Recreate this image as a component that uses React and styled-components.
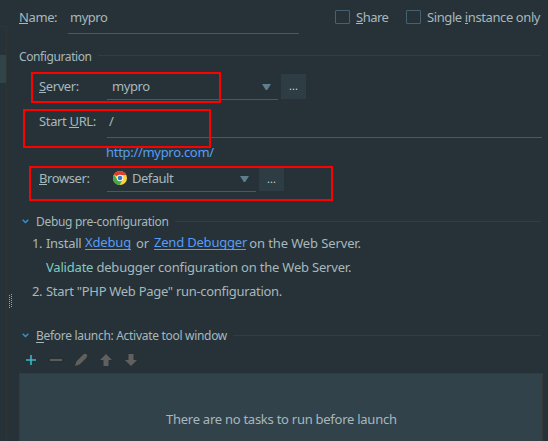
import React from "react";
import styled, { createGlobalStyle } from "styled-components";

const Global = createGlobalStyle`
  * { box-sizing: border-box; }
  body { margin: 0; background: #263238; overflow: hidden; }
`;

const Dialog = styled.div`
  position: relative;
  display: flex;
  width: 548px;
  height: 441px;
  overflow: hidden;
  background: #263238;
  color: #a7b8bd;
  font: 13px/18px "Noto Sans", sans-serif;
  white-space: pre;
`;

const Rail = styled.aside`
  width: 7px;
  height: 415px;
  margin-top: 26px;
  padding-top: 28px;
  border: solid #2f3436;
  border-width: 1px 1px 0 0;
  flex: none;
`;
const RailSelection = styled.div`
  height: 28px;
  background: #314549;
`;
const Gutter = styled.div`
  width: 12px;
  flex: none;
  padding: 294px 0 0 2px;
`;
const Grip = styled.svg`
  display: block;
`;

const Form = styled.main`
  flex: 1;
  min-width: 0;
  display: flex;
  flex-direction: column;
`;
const Row = styled.div`
  display: flex;
  flex: none;
  align-items: flex-start;
  height: ${(p) => p.$h}px;
  padding-top: ${(p) => p.$top || 0}px;
  padding-left: ${(p) => p.$indent || 0}px;
`;
const Text = styled.span`
  flex: none;
  width: ${(p) => (p.$w ? `${p.$w}px` : "auto")};
  text-align: ${(p) => (p.$center ? "center" : "left")};
  letter-spacing: ${(p) => p.$track ?? -0.4}px;
`;
const Heading = styled.span`
  flex: none;
  margin-top: 1px;
  font-size: 12px;
  letter-spacing: ${(p) => p.$track ?? -0.3}px;
`;
const Key = styled.span`
  box-shadow: inset 0 -1px #a7b8bd;
  display: inline-block;
  height: 16px;
  line-height: 18px;
`;
const Link = styled(Text)`
  color: #589df6;
`;
const UnderlinedLink = styled(Link)`
  height: 16px;
  line-height: 16px;
  border-bottom: 1px solid #589df6;
`;
const Good = styled(Text)`
  color: #80cbc4;
`;
const Field = styled.div`
  display: flex;
  flex: none;
  width: ${(p) => p.$w}px;
  height: ${(p) => p.$h}px;
  padding-left: ${(p) => p.$pad}px;
  border-bottom: 1px solid #425b67;
`;
const Arrow = styled.svg`
  display: block;
  margin: 7px 7px 0 auto;
`;
const More = styled.button`
  flex: none;
  width: 25px;
  height: ${(p) => p.$h}px;
  margin: ${(p) => p.$shift}px 0 0 3px;
  padding: 0 0 1px;
  border: 0;
  background: #2e3c43;
  color: #c5d3d8;
  font: 11px/20px "Noto Sans", sans-serif;
`;
const Check = styled.span`
  flex: none;
  width: 15px;
  height: 14px;
  margin: 2px 6px 0 0;
  border: 1px solid #46626f;
  border-radius: 1px;
`;
const Rule = styled.div`
  flex: 1;
  height: 1px;
  margin: ${(p) => p.$y}px 7px 0 6px;
  background: #2f3e46;
`;
const Chevron = styled.svg`
  flex: none;
  margin: 7px 7px 0 3px;
`;
const Toolbar = styled.div`
  display: flex;
  flex: none;
  height: 26px;
  padding: 6px 0 0 5px;
  gap: 11px;
`;
const Tool = styled.svg`
  width: 14px;
  height: 14px;
`;
const TaskPanel = styled.section`
  flex: 1;
  width: 524px;
  padding: 36px 0 0 146px;
  border: solid #38393a;
  border-width: 1px 1px 0 1px;
  background: #32424a;
  display: flex;
`;
const Highlight = styled.div`
  position: absolute;
  left: ${(p) => p.$x}px;
  top: ${(p) => p.$y}px;
  width: ${(p) => p.$w}px;
  height: ${(p) => p.$h}px;
  border: 2px solid #fe0000;
  pointer-events: none;
`;
const ChromeSvg = styled.svg`
  flex: none;
  margin: 2px 5px 0 0;
`;

const DownArrow = () => (
  <Arrow width="9" height="6" viewBox="0 0 9 6">
    <path d="M0 0h9L5.2 6H3.8z" fill="#5f7d8c" />
  </Arrow>
);
const Collapse = () => (
  <Chevron width="7" height="5" viewBox="0 0 7 5">
    <path d="M.7.8 3.5 3.5 6.3.8" fill="none" stroke="#3d8fc9" strokeWidth="1.5" />
  </Chevron>
);
const Chrome = () => (
  <ChromeSvg width="14" height="14" viewBox="0 0 14 14">
    <circle cx="7" cy="7" r="7" fill="#ffd43b" />
    <path d="M7 7 .94 3.5A7 7 0 0 1 13.06 3.5L13.3 4H7z" fill="#e33b2e" />
    <path d="M.94 3.5A7 7 0 0 0 6.6 14L9.7 8.5 7 7 4.3 8.5z" fill="#43a948" />
    <circle cx="7" cy="7" r="3.3" fill="#f5f7f8" />
    <circle cx="7" cy="7" r="2.3" fill="#3476c4" />
  </ChromeSvg>
);

const gripDots = Array.from({ length: 14 }, (_, i) => ({ x: i % 2 ? 0 : 2, y: i }));

export default function App() {
  return (
    <>
      <Global />
      <Dialog>
        <Rail><RailSelection /></Rail>
        <Gutter>
          <Grip width="4" height="14" viewBox="0 0 4 14">
            {gripDots.map((d) => (
              <rect key={d.y} x={d.x} y={d.y} width="1" height="1" fill="#9aa6aa" />
            ))}
          </Grip>
        </Gutter>
        <Form>
          <Row $h={47} $top={8}>
            <Text $w={49}><Key>N</Key>ame:</Text>
            <Field $w={231} $h={26} $pad={2}><Text $track={-0.5}>mypro</Text></Field>
            <Row $h={20} $indent={36}>
              <Check /><Text $w={50} $track={-0.5}><Key>S</Key>hare</Text>
              <Check /><Text>Single <Key>i</Key>nstance only</Text>
            </Row>
          </Row>
          <Row $h={27}>
            <Heading $track={-0.4}>Configuration</Heading><Rule $y={8} />
          </Row>
          <Row $h={38} $top={3} $indent={20}>
            <Text $w={68}><Key>S</Key>erver:</Text>
            <Field $w={171} $h={23} $pad={5}><Text>mypro</Text><DownArrow /></Field>
            <More $h={25} $shift={-3}>...</More>
          </Row>
          <Row $h={31} $indent={20}>
            <Text $w={68} $track={-0.35}>Start <Key>U</Key>RL:</Text>
            <Field $w={435} $h={26} $pad={2}><Text>/</Text></Field>
          </Row>
          <Row $h={26} $indent={87}><Link $track={-0.3}>http://mypro.com/</Link></Row>
          <Row $h={43} $indent={20}>
            <Text $w={68}><Key>B</Key>rowser:</Text>
            <Field $w={149} $h={23} $pad={6}><Chrome /><Text $track={-0.5}>Default</Text><DownArrow /></Field>
            <More $h={23} $shift={-1}>...</More>
          </Row>
          <Row $h={22}>
            <Collapse /><Heading>Debug pre-configuration</Heading><Rule $y={9} />
          </Row>
          <Row $h={24} $indent={13}>
            <Text $w={14}>1.</Text><Text $w={39} $track={-0.3}>Install</Text>
            <UnderlinedLink $w={46} $track={-0.15}>Xdebug</UnderlinedLink>
            <Text $w={23} $center $track={0}>or</Text>
            <UnderlinedLink $w={92} $track={-0.2}>Zend Debugger</UnderlinedLink>
            <Text $track={-0.12}> on the Web Server.</Text>
          </Row>
          <Row $h={24} $indent={27}>
            <Good $track={-0.2}>Validate</Good>
            <Text $track={-0.2}> debugger configuration on the Web Server.</Text>
          </Row>
          <Row $h={44} $indent={13}>
            <Text $w={14}>2.</Text>
            <Text $track={-0.3}>Start "PHP Web Page" run-configuration.</Text>
          </Row>
          <Row $h={21}>
            <Collapse /><Heading><Key>B</Key>efore launch: Activate tool window</Heading><Rule $y={9} />
          </Row>
          <Toolbar>
            <Tool><path d="M2 7h10M7 2v10" stroke="#40b6c5" strokeWidth="1.6" /></Tool>
            <Tool><path d="M1 7h12" stroke="#5c5b5a" strokeWidth="2" /></Tool>
            <Tool><path d="M1 13 2.4 8.4 9 1.8Q11-.2 12.5 1.3T12.2 5L5.6 11.6z" fill="#60605f" /></Tool>
            <Tool><path d="M7 1 13 7H9.5v6h-5V7H1z" fill="#60605f" /></Tool>
            <Tool><path d="M7 13 1 7h3.5V1h5v6H13z" fill="#60605f" /></Tool>
          </Toolbar>
          <TaskPanel><Text $track={-0.26}>There are no tasks to run before launch</Text></TaskPanel>
        </Form>
        <Highlight $x={31} $y={72} $w={190} $h={31} />
        <Highlight $x={23} $y={109} $w={188} $h={39} />
        <Highlight $x={29} $y={166} $w={304} $h={35} />
      </Dialog>
    </>
  );
}
